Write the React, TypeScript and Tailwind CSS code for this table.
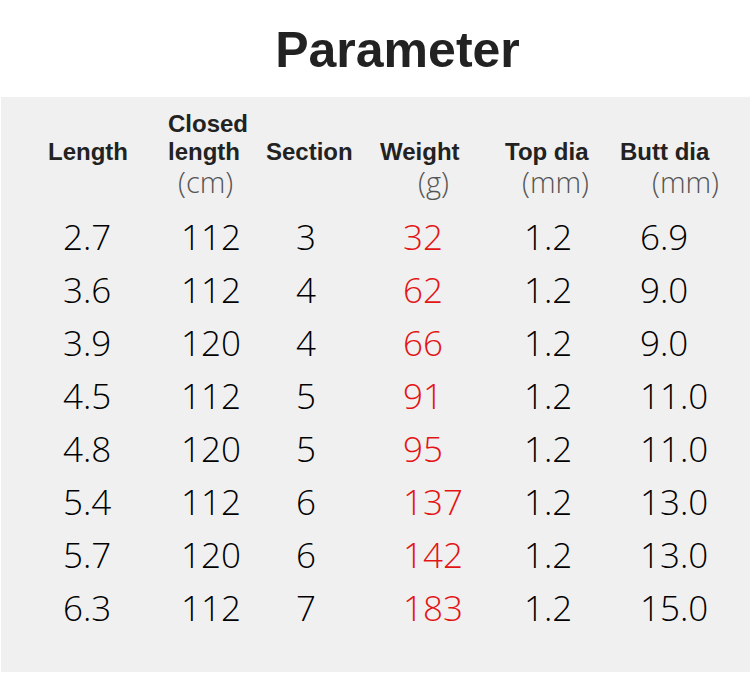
import React from 'react';

type Row = {
  length: string;
  closed: string;
  section: string;
  weight: string;
  top: string;
  butt: string;
};

const rows: Row[] = [
  { length: '2.7', closed: '112', section: '3', weight: '32', top: '1.2', butt: '6.9' },
  { length: '3.6', closed: '112', section: '4', weight: '62', top: '1.2', butt: '9.0' },
  { length: '3.9', closed: '120', section: '4', weight: '66', top: '1.2', butt: '9.0' },
  { length: '4.5', closed: '112', section: '5', weight: '91', top: '1.2', butt: '11.0' },
  { length: '4.8', closed: '120', section: '5', weight: '95', top: '1.2', butt: '11.0' },
  { length: '5.4', closed: '112', section: '6', weight: '137', top: '1.2', butt: '13.0' },
  { length: '5.7', closed: '120', section: '6', weight: '142', top: '1.2', butt: '13.0' },
  { length: '6.3', closed: '112', section: '7', weight: '183', top: '1.2', butt: '15.0' },
];

const cols = 'grid grid-cols-[120px_98px_114px_125px_115px_133px]';
const bold = "font-['Liberation_Sans',Arial,sans-serif] font-bold text-[24px] leading-[28px] text-[#222]";
const unit = "font-['Open_Sans',sans-serif] font-light text-[29px] leading-[32px] text-[#555]";
const num = "font-['Open_Sans',sans-serif] font-light text-[35px] leading-[53px] text-black";

function Header() {
  return (
    <div className={cols}>
      <div className="flex flex-col">
        <span className={`${bold} h-[28px]`}></span>
        <span className={bold}>Length</span>
      </div>
      <div className="flex flex-col">
        <span className={bold}>Closed</span>
        <span className={bold}>length</span>
        <span className={`${unit} pl-[10px]`}>(cm)</span>
      </div>
      <div className="flex flex-col">
        <span className={`${bold} h-[28px]`}></span>
        <span className={bold}>Section</span>
      </div>
      <div className="flex flex-col">
        <span className={`${bold} h-[28px]`}></span>
        <span className={bold}>Weight</span>
        <span className={`${unit} pl-[38px]`}>(g)</span>
      </div>
      <div className="flex flex-col">
        <span className={`${bold} h-[28px]`}></span>
        <span className={bold}>Top dia</span>
        <span className={`${unit} pl-[17px]`}>(mm)</span>
      </div>
      <div className="flex flex-col">
        <span className={`${bold} h-[28px]`}></span>
        <span className={bold}>Butt dia</span>
        <span className={`${unit} pl-[32px]`}>(mm)</span>
      </div>
    </div>
  );
}

export default function App() {
  return (
    <div className="w-[753px] h-[674px] bg-white overflow-hidden">
      <div className="h-[97px] pt-[21px] pl-[42px] text-center">
        <h1 className="font-['Liberation_Sans',Arial,sans-serif] font-bold text-[50px] leading-[58px] text-[#222]">
          Parameter
        </h1>
      </div>

      <div className="ml-px w-[749px] h-[575px] bg-[#f0f0f0] pt-[13px] pl-[47px]">
        <Header />
        <div className="mt-3">
          {rows.map((r, i) => (
            <div key={i} className={`${cols} ${num}`}>
              <span className="pl-[15px]">{r.length}</span>
              <span className="pl-[13px]">{r.closed}</span>
              <span className="pl-[30px]">{r.section}</span>
              <span className="pl-[23px] text-[#e41414]">{r.weight}</span>
              <span className="pl-[19px]">{r.top}</span>
              <span className="pl-[20px]">{r.butt}</span>
            </div>
          ))}
        </div>
      </div>
    </div>
  );
}
